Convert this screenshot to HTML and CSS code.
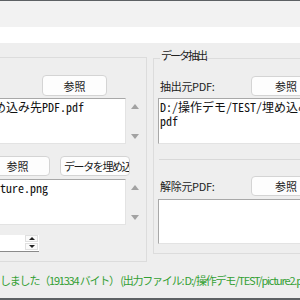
FILE: index.html
```html
<!DOCTYPE html>
<html lang="ja">
<head>
    <meta charset="UTF-8">
    <title>PDF データ埋め込み</title>
    <link rel="stylesheet" href="styles.css">
</head>
<body>

<div class="edge"></div>
<div class="toolbar"></div>
<div class="pathbar"></div>

<div class="groups">
    <div class="panel embed">
        <div class="row r1"><button class="btn">参照</button></div>
        <div class="textbox">
            <div class="text">D:/操作デモ/TEST/埋め込み先PDF.pdf</div>
            <div class="vscroll"><span class="arr up"></span><span class="arr down"></span></div>
        </div>
        <div class="row r2">
            <button class="btn">参照</button>
            <button class="btn wide">データを埋め込み</button>
        </div>
        <div class="textbox tb2">
            <div class="text">D:/操作デモ/TEST/picture.png</div>
            <div class="vscroll"><span class="arr up"></span><span class="arr down"></span></div>
        </div>
        <div class="row r3">
            <div class="spin">
                <span class="spin-val">1</span>
                <span class="spin-btns"><span class="sb"><span class="tri up"></span></span><span class="sb"><span class="tri down"></span></span></span>
            </div>
        </div>
    </div>

    <fieldset class="panel extract">
        <legend>データ抽出</legend>
        <div class="row lr">
            <span class="lbl">抽出元PDF:</span>
            <button class="btn">参照</button>
        </div>
        <div class="textbox plain">
            <div class="text">D:/操作デモ/TEST/埋め込み先PDF.<br>pdf</div>
        </div>
        <div class="sep"></div>
        <div class="row lr r4">
            <span class="lbl">解除元PDF:</span>
            <button class="btn">参照</button>
        </div>
        <div class="textbox plain tb4">
            <div class="text"></div>
        </div>
    </fieldset>
</div>

<div class="status">しました（191334 バイト） (出力ファイル: D:/操作デモ/TEST/picture2.pdf)</div>
<div class="spacer"></div>
<div class="edge bottom"></div>

</body>
</html>
```

FILE: styles.css
```css
body { margin: 0; width: 300px; height: 300px; overflow: hidden; background: #eeeeee; color: #1b1b1b; font: 11px "Noto Sans CJK JP", sans-serif; display: flex; flex-direction: column; }
.edge { height: 1px; background: #5d6164; flex: none; }
.edge.bottom { height: 2px; }
.toolbar { height: 26px; background: #f2f2f2; flex: none; }
.pathbar { height: 16px; background: #fff; flex: none; }

.groups { display: flex; gap: 6px; margin: 5px 0 0 -132px; align-items: flex-start; flex: none; }
.panel { border: 1px solid #dcdcdc; box-sizing: border-box; }
.embed { width: 279px; margin-top: 9px; padding: 17px 0 9px 8px; flex: none; }
.extract { margin: 0; min-width: 0; width: 240px; flex: none; padding: 8px 0 9px 4px; }
legend { padding: 0 1px 6px; margin-left: 2px; line-height: 14px; color: #222; letter-spacing: -2px; }

.row { display: flex; justify-content: flex-end; }
.r1 { height: 21px; margin-right: 39px; }
.r2 { height: 20px; margin: 12px 16px 0 0; gap: 10px; }
.r3 { margin: 10px 107px 0 0; }
.lr { justify-content: flex-start; height: 20px; align-items: center; }
.r4 { margin-top: 16px; }
.lbl { width: 93px; padding-left: 2px; box-sizing: border-box; color: #222; letter-spacing: -0.3px; }

.btn { width: 65px; height: 100%; padding: 0; background: #fdfdfd; border: 1px solid #d4d4d4; border-radius: 4px; font: 11px "Noto Sans CJK JP", sans-serif; color: #1b1b1b; }
.btn.wide { width: 70px; overflow: hidden; white-space: nowrap; text-align: left; padding-left: 3px; letter-spacing: -1.4px; }
.lr .btn { width: 70px; }

.textbox { display: flex; height: 46px; margin: 2px 3px 0 0; }
.tb2 { margin-top: 3px; }
.text { flex: 1; background: #fff; border: 1px solid #e3e3e3; border-top-color: #a8a8a8; border-left-color: #a8a8a8; padding: 1px 2px; white-space: nowrap; overflow: hidden; font: 12px/14px "Noto Sans Mono CJK JP", "Noto Sans CJK JP", monospace; color: #111; }
.plain .text { padding-left: 1px; }
.tb4 { height: 45px; margin-top: 3px; }
.vscroll { width: 17px; display: flex; flex-direction: column; justify-content: space-between; align-items: center; padding: 6px 0 5px; }
.arr { width: 0; height: 0; border-left: 4px solid transparent; border-right: 4px solid transparent; }
.arr.up { border-bottom: 5px solid #a2a2a2; }
.arr.down { border-top: 5px solid #a2a2a2; }

.sep { height: 1px; background: #d8d8d8; margin: 15px 0 0 1px; }

.spin { width: 60px; height: 17px; background: #fff; border-bottom: 1px solid #8a8a8a; box-sizing: border-box; display: flex; justify-content: space-between; }
.spin-val { padding-left: 4px; line-height: 16px; font-size: 11px; }
.spin-btns { display: flex; flex-direction: column; gap: 1px; padding: 0 1px 0 0; }
.sb { width: 13px; height: 7px; border: 1px solid #e0e0e0; box-sizing: border-box; display: flex; align-items: center; justify-content: center; background: #fafafa; }
.tri { width: 0; height: 0; border-left: 3px solid transparent; border-right: 3px solid transparent; }
.tri.up { border-bottom: 3px solid #222; }
.tri.down { border-top: 3px solid #222; }

.status { margin-top: 10px; line-height: 16px; white-space: nowrap; overflow: hidden; color: #34a034; font-size: 11px; letter-spacing: -1.2px; flex: none; }
.spacer { flex: 1; }
```
